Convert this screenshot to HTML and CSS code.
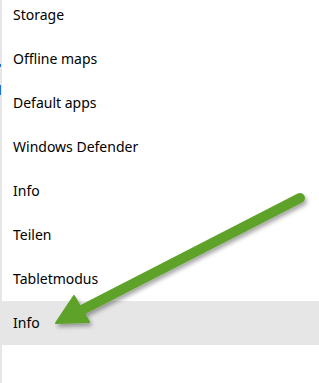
FILE: index.html
```html
<!DOCTYPE html>
<html lang="en">
<head>
  <meta charset="UTF-8">
  <title>Settings</title>
  <link rel="stylesheet" href="styles.css">
</head>
<body>
  <div class="panel">
    <!-- left edge of the neighbouring pane -->
    <div class="edge">
      <span class="tick tick-a"></span>
      <span class="tick tick-b"></span>
    </div>

    <ul class="menu">
      <li>Storage</li>
      <li>Offline maps</li>
      <li>Default apps</li>
      <li>Windows Defender</li>
      <li>Info</li>
      <li>Teilen</li>
      <li>Tabletmodus</li>
      <li class="active">Info</li>
    </ul>

    <svg class="arrow" width="319" height="383" viewBox="0 0 319 383">
      <defs>
        <filter id="shade" x="-20%" y="-20%" width="140%" height="140%">
          <feDropShadow dx="2" dy="3" stdDeviation="2" flood-color="#000" flood-opacity="0.35"/>
        </filter>
      </defs>
      <g filter="url(#shade)" fill="#5fa22b" stroke="#5fa22b">
        <line x1="300" y1="198" x2="78" y2="312" stroke-width="10" stroke-linecap="round"/>
        <polygon points="74,296 56,323 89,322" stroke-width="2" stroke-linejoin="round"/>
      </g>
    </svg>
  </div>
</body>
</html>
```

FILE: styles.css
```css
body {
  margin: 0;
  background: #fff;
  font-family: "Noto Sans", "Open Sans", sans-serif;
  color: #000;
}
.panel {
  position: relative;
  width: 319px;
  height: 383px;
  overflow: hidden;
  display: flex;
}
.edge {
  position: relative;
  width: 2px;
  background: #e6e6e6;
  flex-shrink: 0;
}
.tick {
  position: absolute;
  left: 0;
  width: 1px;
  background: #1a73d8;
}
.tick-a {
  top: 64px;
  height: 3px;
}
.tick-b {
  top: 85px;
  height: 10px;
}
.menu {
  list-style: none;
  margin: -7px 0 0 0;
  padding: 0;
  flex: 1;
}
.menu li {
  height: 44px;
  line-height: 44px;
  padding-left: 11px;
  font-size: 14px;
}
.menu li.active {
  background: #e6e6e6;
}
.arrow {
  position: absolute;
  left: 0;
  top: 0;
}
```
